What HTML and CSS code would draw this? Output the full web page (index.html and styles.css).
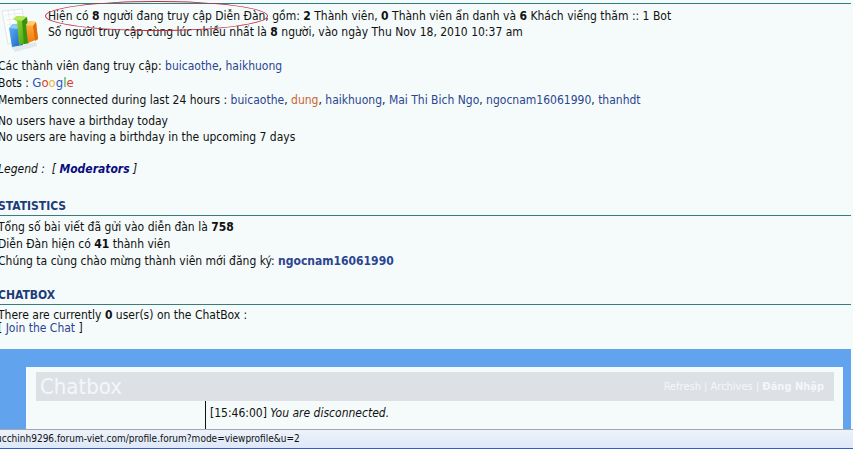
FILE: index.html
```html
<!DOCTYPE html>
<html lang="vi">
<head>
    <meta charset="UTF-8">
    <meta name="viewport" content="width=device-width, initial-scale=1.0">
    <title>Diễn Đàn</title>
    <link rel="stylesheet" href="styles.css">
</head>
<body>
    <main class="forum">
        <section class="online">
            <div class="online-summary">
                <svg class="online-icon" width="42" height="48" viewBox="0 0 42 48" aria-hidden="true">
                    <defs>
                        <linearGradient id="blue" x1="0" y1="0" x2="1" y2="1">
                            <stop offset="0" stop-color="#63b4f4"/>
                            <stop offset="1" stop-color="#1560c8"/>
                        </linearGradient>
                        <linearGradient id="green" x1="0" y1="0" x2="1" y2="1">
                            <stop offset="0" stop-color="#a4e03c"/>
                            <stop offset="1" stop-color="#3c9c10"/>
                        </linearGradient>
                        <linearGradient id="orange" x1="0" y1="0" x2="0" y2="1">
                            <stop offset="0" stop-color="#ffb648"/>
                            <stop offset="1" stop-color="#f07808"/>
                        </linearGradient>
                    </defs>
                    <path d="M2 5L22 3L27 32L8 38Z" fill="#fdfefe" stroke="#e0e5e8"/>
                    <path d="M5 9L23 7M6 14L24 12M7 19L25 17M8 24L25 22M8 5L13 34M14 4L19 33" stroke="#eaeef0" fill="none"/>
                    <path d="M11 41L36 36L37 40L15 46Z" fill="#e2e9ed"/>
                    <path d="M9 22L13 18L21 19L23 39L12 41Z" fill="url(#blue)"/>
                    <path d="M9 22L13 18L21 19L17 23Z" fill="#8accfc"/>
                    <path d="M13 13L17 10L27 11L29 37L19 39L17 15Z" fill="url(#green)"/>
                    <path d="M13 13L17 10L27 11L22 15Z" fill="#b8e858"/>
                    <path d="M22 15L27 11L29 37L24 38Z" fill="#379410"/>
                    <path d="M26 19L29 15L36 16L38 33L28 37Z" fill="url(#orange)"/>
                    <path d="M26 19L29 15L36 16L33 20Z" fill="#ffcc70"/>
                    <path d="M33 20L36 16L38 33L35 35Z" fill="#e06c08"/>
                </svg>
                <p>
                    <span class="circled">Hiện có <b>8</b> người đang truy cập Diễn Đàn</span>, gồm: <b>2</b> Thành viên, <b>0</b> Thành viên ẩn danh và <b>6</b> Khách viếng thăm :: 1 Bot<br>
                    Số người truy cập cùng lúc nhiều nhất là <b>8</b> người, vào ngày Thu Nov 18, 2010 10:37 am
                </p>
            </div>
            <p class="members">
                Các thành viên đang truy cập: <a href="#">buicaothe</a>, <a href="#">haikhuong</a><br>
                Bots : <span class="google"><span class="g-blue">G</span><span class="g-red">o</span><span class="g-yellow">o</span><span class="g-blue">g</span><span class="g-green">l</span><span class="g-red">e</span></span><br>
                Members connected during last 24 hours : <a href="#">buicaothe</a>, <a href="#" class="admin">dung</a>, <a href="#">haikhuong</a>, <a href="#">Mai Thi Bich Ngo</a>, <a href="#">ngocnam16061990</a>, <a href="#">thanhdt</a>
            </p>
            <p class="birthdays">
                No users have a birthday today<br>
                No users are having a birthday in the upcoming 7 days
            </p>
            <p class="legend">Legend :&nbsp; [ <a href="#">Moderators</a> ]</p>
        </section>

        <h2>Statistics</h2>
        <p class="stats">
            Tổng số bài viết đã gửi vào diễn đàn là <b>758</b><br>
            Diễn Đàn hiện có <b>41</b> thành viên<br>
            Chúng ta cùng chào mừng thành viên mới đăng ký: <a href="#"><b>ngocnam16061990</b></a>
        </p>

        <h2>Chatbox</h2>
        <p class="chat-info">
            There are currently <b>0</b> user(s) on the ChatBox :<br>
            [ <a href="#">Join the Chat</a> ]
        </p>

        <section class="chat-frame">
            <div class="chatbox">
                <header class="chat-header">
                    <h3>Chatbox</h3>
                    <nav><a href="#">Refresh</a> | <a href="#">Archives</a> | <a href="#"><b>Đăng Nhập</b></a></nav>
                </header>
                <div class="chat-body">
                    <div class="chat-users"></div>
                    <div class="chat-messages">[15:46:00] <i>You are disconnected.</i></div>
                </div>
            </div>
        </section>
    </main>
    <footer class="statusbar">ucchinh9296.forum-viet.com/profile.forum?mode=viewprofile&amp;u=2</footer>
</body>
</html>
```
FILE: styles.css
```css
* {
    box-sizing: border-box;
}

body {
    display: flex;
    flex-direction: column;
    height: 100vh;
    margin: 0;
    overflow: hidden;
    background: #f5fbfb;
    color: #111;
    font-family: Tahoma, "DejaVu Sans Condensed", "DejaVu Sans", sans-serif;
    font-size: 12px;
    line-height: 17px;
}

h2, h3, p {
    margin: 0;
}

a {
    color: #2b4590;
    text-decoration: none;
}

.forum {
    display: flex;
    flex: 1;
    flex-direction: column;
    min-height: 0;
    margin-left: -2px;
    padding: 3px 2px 0 0;
}

.online {
    border-top: 1px solid #2f8080;
}

.online-summary {
    display: flex;
    gap: 6px;
    height: 54px;
    padding: 4px 0 0 2px;
    line-height: 16px;
    white-space: nowrap;
}

.online-icon {
    flex: none;
    margin-top: -2px;
}

.circled {
    position: relative;
}

/* red pen ring around the visitor count */
.circled::after {
    content: "";
    position: absolute;
    inset: -8px -3px;
    border: 1px solid #c4283c;
    border-radius: 50%;
}

.google {
    font-size: 13px;
    line-height: 16px;
}

.g-blue {
    color: #2a56b8;
}

.g-red {
    color: #d8402c;
}

.g-yellow {
    color: #e8b838;
}

.g-green {
    color: #38a048;
}

.admin {
    color: #c8642c;
}

.birthdays {
    margin-top: 4px;
    line-height: 16px;
}

.legend {
    margin-top: 16px;
    font-style: italic;
}

.legend a {
    color: #0a0a80;
    font-weight: bold;
}

h2 {
    margin-top: 20px;
    border-bottom: 1px solid #3c7c78;
    color: #1f3c78;
    font-size: 12px;
    line-height: 17px;
    text-transform: uppercase;
}

.stats {
    padding-top: 3px;
}

.stats + h2 {
    margin-top: 17px;
}

.chat-info {
    padding: 4px 0 14px;
    line-height: 13px;
}

.chat-frame {
    display: flex;
    flex: 1;
    min-height: 0;
    padding: 18px 8px 0 28px;
    background: #62a3ee;
}

.chatbox {
    display: flex;
    flex: 1;
    flex-direction: column;
    padding: 5px 9px 0 10px;
    background: #f5fafa;
}

.chat-header {
    display: flex;
    align-items: center;
    justify-content: space-between;
    height: 29px;
    padding: 0 10px 0 4px;
    background: #dde1e6;
    color: #f4f7fa;
    font-size: 11px;
}

.chat-header h3 {
    font-size: 22px;
    font-weight: normal;
    line-height: 29px;
}

.chat-header a {
    color: inherit;
}

.chat-body {
    display: flex;
    flex: 1;
}

.chat-users {
    width: 170px;
    border-right: 1px solid #111;
}

.chat-messages {
    flex: 1;
    padding: 4px;
}

.statusbar {
    height: 20px;
    border-top: 1px solid #a4a8b0;
    border-bottom: 1px solid #2c64c0;
    background: linear-gradient(#eef2fa, #dde8f8);
    font-size: 10px;
    line-height: 18px;
    text-indent: -4px;
}
```
